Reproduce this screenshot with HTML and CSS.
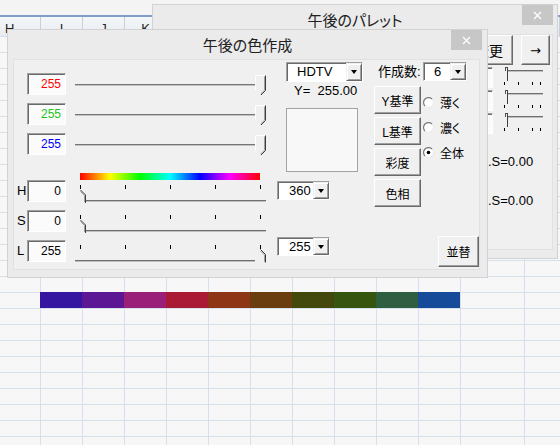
FILE: index.html
```html
<!DOCTYPE html>
<html lang="ja">
<head>
<meta charset="utf-8">
<title>午後の色作成</title>
<link rel="stylesheet" href="styles.css">
</head>
<body>
<div class="sheet">
  <div class="ribbon"></div>
  <div class="colheads">
    <div class="ch ch-first">H</div>
    <div class="ch">I</div>
    <div class="ch">J</div>
    <div class="ch">K</div>
    <div class="ch"></div>
    <div class="ch"></div>
    <div class="ch"></div>
    <div class="ch"></div>
    <div class="ch"></div>
    <div class="ch"></div>
    <div class="ch"></div>
    <div class="ch"></div>
    <div class="ch"></div>
  </div>
  <div class="cells">
    <div class="swatches">
      <div class="swatch" style="background:#3516a0"></div>
      <div class="swatch" style="background:#5c1894"></div>
      <div class="swatch" style="background:#991f79"></div>
      <div class="swatch" style="background:#ab1a34"></div>
      <div class="swatch" style="background:#8d3515"></div>
      <div class="swatch" style="background:#6b3e10"></div>
      <div class="swatch" style="background:#43480c"></div>
      <div class="swatch" style="background:#36550f"></div>
      <div class="swatch" style="background:#2f5e41"></div>
      <div class="swatch" style="background:#154b99"></div>
    </div>
  </div>
</div>

<div class="win win-back">
  <div class="titlebar">
    <div class="title">午後のパレット</div>
    <div class="close close-back"><svg width="9" height="9" viewBox="0 0 9 9"><path d="M1 1L8 8M8 1L1 8" stroke="#fff" stroke-width="1.3"/></svg></div>
  </div>
  <div class="bpanel">
    <div class="bright">
      <div class="brow">
        <div class="btn btn-chg">変更</div>
        <div class="btn btn-arr">→</div>
      </div>
      <div class="minis">
        <div class="mrow">
          <div class="tb tb-mini"></div>
          <svg width="46" height="23" viewBox="0 0 46 23"><path d="M2.5 1V4M2 0.5H4.5" stroke="#505050"/><path d="M4.5 0V14" stroke="#404040"/><path d="M5 3.5H40" stroke="#6e6e6e"/><path d="M5 4.5H40" stroke="#c0c0c0"/><path d="M1.5 15V18M15.5 15V18M29.5 15V18M37.5 15V18" stroke="#000"/></svg>
        </div>
        <div class="mrow">
          <div class="tb tb-mini"></div>
          <svg width="46" height="23" viewBox="0 0 46 23"><path d="M2.5 1V4M2 0.5H4.5" stroke="#505050"/><path d="M4.5 0V14" stroke="#404040"/><path d="M5 3.5H40" stroke="#6e6e6e"/><path d="M5 4.5H40" stroke="#c0c0c0"/><path d="M1.5 15V18M15.5 15V18M29.5 15V18M37.5 15V18" stroke="#000"/></svg>
        </div>
        <div class="mrow">
          <div class="tb tb-mini"></div>
          <svg width="46" height="23" viewBox="0 0 46 23"><path d="M2.5 1V4M2 0.5H4.5" stroke="#505050"/><path d="M4.5 0V14" stroke="#404040"/><path d="M5 3.5H40" stroke="#6e6e6e"/><path d="M5 4.5H40" stroke="#c0c0c0"/><path d="M1.5 15V18M15.5 15V18M29.5 15V18M37.5 15V18" stroke="#000"/></svg>
        </div>
      </div>
      <div class="slabels">
        <div class="slabel">.S=0.00</div>
        <div class="slabel">.S=0.00</div>
      </div>
    </div>
  </div>
</div>

<div class="win win-front">
  <div class="titlebar">
    <div class="title">午後の色作成</div>
    <div class="close"><svg width="9" height="9" viewBox="0 0 9 9"><path d="M1 1L8 8M8 1L1 8" stroke="#fff" stroke-width="1.3"/></svg></div>
  </div>
  <div class="panel">
    <div class="pleft">
      <div class="ptop">
        <div class="rows rows-rgb">
          <div class="srow">
            <span class="lbl"></span>
            <div class="tb tb-r">255</div>
            <svg class="slider" width="195" height="24" viewBox="0 0 195 24"><path d="M0 11.5H181" stroke="#767676"/><path d="M0 12.5H181" stroke="#c2c2c2"/><path d="M180.5 17.5V2.5H190" fill="none" stroke="#fff"/><path d="M190.5 2.5V17.5L186 22" fill="none" stroke="#3c3c3c"/><path d="M189.5 3.5V17.2L185.5 21" fill="none" stroke="#a0a0a0"/></svg>
          </div>
          <div class="srow">
            <span class="lbl"></span>
            <div class="tb tb-g">255</div>
            <svg class="slider" width="195" height="24" viewBox="0 0 195 24"><path d="M0 11.5H181" stroke="#767676"/><path d="M0 12.5H181" stroke="#c2c2c2"/><path d="M180.5 17.5V2.5H190" fill="none" stroke="#fff"/><path d="M190.5 2.5V17.5L186 22" fill="none" stroke="#3c3c3c"/><path d="M189.5 3.5V17.2L185.5 21" fill="none" stroke="#a0a0a0"/></svg>
          </div>
          <div class="srow">
            <span class="lbl"></span>
            <div class="tb tb-b">255</div>
            <svg class="slider" width="195" height="24" viewBox="0 0 195 24"><path d="M0 11.5H181" stroke="#767676"/><path d="M0 12.5H181" stroke="#c2c2c2"/><path d="M180.5 17.5V2.5H190" fill="none" stroke="#fff"/><path d="M190.5 2.5V17.5L186 22" fill="none" stroke="#3c3c3c"/><path d="M189.5 3.5V17.2L185.5 21" fill="none" stroke="#a0a0a0"/></svg>
          </div>
        </div>
        <div class="colc">
          <div class="combo combo-hdtv"><span class="cv">HDTV</span><span class="dd"></span></div>
          <div class="yval">Y=  255.00</div>
          <div class="preview"></div>
        </div>
      </div>
      <div class="rainbow"></div>
      <div class="rows rows-hsl">
        <div class="srow">
          <span class="lbl">H</span>
          <div class="tb">0</div>
          <svg class="slider" width="195" height="24" viewBox="0 0 195 24"><path d="M5.5 5V9M50.5 5V9M95.5 5V9M140.5 5V9M185.5 5V9" stroke="#000"/><path d="M11 20.5H191" stroke="#6e6e6e"/><path d="M11 21.5H191" stroke="#c0c0c0"/><path d="M5.5 10L10.5 15V23" fill="none" stroke="#3c3c3c"/><path d="M5.5 11.5L9.5 15.5V22" fill="none" stroke="#a0a0a0"/></svg>
          <div class="combo combo-num combo-h"><span class="cv">360</span><span class="dd"></span></div>
        </div>
        <div class="srow">
          <span class="lbl">S</span>
          <div class="tb">0</div>
          <svg class="slider" width="195" height="24" viewBox="0 0 195 24"><path d="M5.5 5V9M50.5 5V9M95.5 5V9M140.5 5V9M185.5 5V9" stroke="#000"/><path d="M11 20.5H191" stroke="#6e6e6e"/><path d="M11 21.5H191" stroke="#c0c0c0"/><path d="M5.5 10L10.5 15V23" fill="none" stroke="#3c3c3c"/><path d="M5.5 11.5L9.5 15.5V22" fill="none" stroke="#a0a0a0"/></svg>
        </div>
        <div class="srow">
          <span class="lbl">L</span>
          <div class="tb">255</div>
          <svg class="slider" width="195" height="24" viewBox="0 0 195 24"><path d="M5.5 5V9M50.5 5V9M95.5 5V9M140.5 5V9M185.5 5V9" stroke="#000"/><path d="M0 20.5H180" stroke="#6e6e6e"/><path d="M0 21.5H180" stroke="#c0c0c0"/><path d="M185.5 9.5L190.5 14.5V22.5" fill="none" stroke="#3c3c3c"/><path d="M185.5 11L189.5 15V22" fill="none" stroke="#a0a0a0"/></svg>
          <div class="combo combo-num combo-l"><span class="cv">255</span><span class="dd"></span></div>
        </div>
      </div>
    </div>
    <div class="cold">
      <div class="cntlbl">作成数:</div>
      <div class="btn btn-side">Y基準</div>
      <div class="btn btn-side">L基準</div>
      <div class="btn btn-side">彩度</div>
      <div class="btn btn-side">色相</div>
    </div>
    <div class="cole">
      <div class="combo combo-cnt"><span class="cv">6</span><span class="dd"></span></div>
      <div class="radios">
        <div class="radio"><svg width="11" height="11" viewBox="0 0 11 11"><circle cx="5.5" cy="5.5" r="4.8" fill="#fff"/><path d="M2 9A4.8 4.8 0 0 1 9 2" fill="none" stroke="#7a7a7a" stroke-width="1.2"/><path d="M9 2A4.8 4.8 0 0 1 2 9" fill="none" stroke="#e6e6e6" stroke-width="1"/></svg><span>薄く</span></div>
        <div class="radio"><svg width="11" height="11" viewBox="0 0 11 11"><circle cx="5.5" cy="5.5" r="4.8" fill="#fff"/><path d="M2 9A4.8 4.8 0 0 1 9 2" fill="none" stroke="#7a7a7a" stroke-width="1.2"/><path d="M9 2A4.8 4.8 0 0 1 2 9" fill="none" stroke="#e6e6e6" stroke-width="1"/></svg><span>濃く</span></div>
        <div class="radio"><svg width="11" height="11" viewBox="0 0 11 11"><circle cx="5.5" cy="5.5" r="4.8" fill="#fff"/><path d="M2 9A4.8 4.8 0 0 1 9 2" fill="none" stroke="#7a7a7a" stroke-width="1.2"/><path d="M9 2A4.8 4.8 0 0 1 2 9" fill="none" stroke="#e6e6e6" stroke-width="1"/><circle cx="5.5" cy="5.5" r="1.8" fill="#000"/></svg><span>全体</span></div>
      </div>
      <div class="btn btn-sort">並替</div>
    </div>
  </div>
</div>
</body>
</html>
```

FILE: styles.css
```css
* { box-sizing: border-box; }
html, body { margin: 0; padding: 0; }
body {
  width: 560px;
  height: 445px;
  overflow: hidden;
  position: relative;
  background: #f7f7f7;
  font-family: "Liberation Sans", "Noto Sans CJK JP", sans-serif;
  font-size: 13px;
  color: #000;
}

/* ---------- spreadsheet ---------- */
.sheet {
  width: 560px;
  height: 445px;
  display: flex;
  flex-direction: column;
}
.ribbon {
  flex: none;
  height: 17px;
  background: #f4f4f4;
  border-bottom: 2px solid #7f9ec9;
}
.colheads {
  flex: none;
  height: 19px;
  display: grid;
  grid-template-columns: 41px repeat(10, 42px) 64px 1fr;
  background: linear-gradient(#f4f6f9, #e8ecf1);
}
.ch {
  border-right: 1px solid #c6d0dc;
  text-align: center;
  font-size: 13px;
  line-height: 19px;
  padding-top: 2px;
  color: #222;
}
.ch-first { text-align: left; padding-left: 5px; }
.cells {
  flex: 1;
  display: grid;
  grid-template-columns: 40px repeat(10, 42px) 1fr;
  grid-template-rows: repeat(26, 16px);
  background-color: #f7f7f7;
  background-image:
    linear-gradient(#d6dfeb, #d6dfeb),
    repeating-linear-gradient(to right, #d6dfeb 0 1px, transparent 1px 42px),
    repeating-linear-gradient(to bottom, #d6dfeb 0 1px, transparent 1px 16px);
  background-size: 1px 100%, 421px 100%, 100% 100%;
  background-position: 524px 0, 40px 0, 0 0;
  background-repeat: no-repeat;
}
.swatches {
  grid-row: 17;
  grid-column: 2 / 12;
  display: flex;
}
.swatch { flex: 1; }

/* ---------- windows ---------- */
.win {
  position: absolute;
  display: flex;
  flex-direction: column;
  background: #ebebeb;
  border: 1px solid #d2d2d2;
}
.win-front { left: 7px; top: 29px; width: 481px; height: 249px; }
.win-back { left: 152px; top: 4px; width: 406px; height: 255px; }

.titlebar {
  flex: none;
  height: 29px;
  display: grid;
  grid-template-columns: 1fr auto 1fr;
}
.title {
  grid-column: 2;
  grid-row: 1;
  font-family: "Noto Sans CJK JP", sans-serif;
  font-size: 15px;
  line-height: 29px;
  color: #202020;
  white-space: nowrap;
  font-feature-settings: "palt";
}
.close {
  grid-column: 3;
  grid-row: 1;
  justify-self: end;
  width: 31px;
  height: 20px;
  margin-right: 5px;
  background: #c7c7c7;
  display: flex;
  align-items: center;
  justify-content: center;
}
.close-back { margin-right: 4px; }

/* ---------- front panel ---------- */
.panel {
  flex: none;
  margin-left: 5px;
  width: 467px;
  height: 211px;
  background: #f0f0f0;
  box-shadow: inset 0 0 0 1px #e1e1e1;
  display: flex;
}
.pleft { width: 350px; display: flex; flex-direction: column; }
.ptop { height: 114px; flex: none; display: flex; }
.rows { display: flex; flex-direction: column; gap: 8px; }
.rows-rgb { padding-top: 14px; }
.srow { display: flex; height: 22px; flex: none; }
.lbl { width: 14px; flex: none; padding-left: 4px; font-size: 13px; line-height: 22px; }
.tb {
  width: 39px;
  height: 22px;
  flex: none;
  border: 1px solid;
  border-color: #a0a0a0 #fff #fff #a0a0a0;
  box-shadow: inset 1px 1px #696969;
  background: #fbfbfb;
  text-align: right;
  padding-right: 4px;
  font-size: 12px;
  line-height: 20px;
}
.tb-r { color: #f00; }
.tb-g { color: #1cc51c; }
.tb-b { color: #00f; }
.slider { flex: none; margin-left: 9px; overflow: visible; }

.colc { margin-left: 16px; width: 77px; padding-top: 3px; display: flex; flex-direction: column; }
.combo {
  display: flex;
  height: 20px;
  flex: none;
  border: 1px solid;
  border-color: #a0a0a0 #fff #fff #a0a0a0;
  box-shadow: inset 1px 1px #696969;
  background: #fff;
}
.cv { flex: 1; padding-left: 10px; font-size: 13px; line-height: 18px; }
.dd {
  width: 16px;
  flex: none;
  background: #f0f0f0;
  border: 1px solid;
  border-color: #f0f0f0 #696969 #696969 #f0f0f0;
  box-shadow: inset 1px 1px #fff, inset -1px -1px #a0a0a0;
  display: flex;
  align-items: center;
  justify-content: center;
}
.dd::after {
  content: "";
  border-left: 3.5px solid transparent;
  border-right: 3.5px solid transparent;
  border-top: 4px solid #000;
}
.yval { height: 18px; padding-left: 8px; line-height: 18px; font-size: 13px; white-space: pre; }
.preview { margin-top: 8px; width: 72px; height: 64px; border: 1px solid #a3a3a3; background: #f8f8f8; }

.rainbow {
  flex: none;
  margin-left: 67px;
  width: 180px;
  height: 7px;
  background: linear-gradient(to right, #f00, #ff0, #0f0, #0ff, #00f, #f0f, #f00);
}
.srow .combo { width: 53px; height: 19px; margin-left: 7px; }
.combo-num .cv { padding-left: 11px; }
.combo-h { margin-top: 1px; }
.combo-l { margin-top: -3px; }

.cold { margin-left: 11px; width: 47px; flex: none; display: flex; flex-direction: column; gap: 3px; }
.cntlbl {
  height: 24px;
  padding-left: 4px;
  line-height: 26px;
  font-size: 13px;
  white-space: nowrap;
  font-feature-settings: "palt";
}
.btn {
  display: flex;
  align-items: center;
  justify-content: center;
  background: #f0f0f0;
  border: 1px solid;
  border-color: #fff #696969 #696969 #fff;
  box-shadow: inset -1px -1px #a0a0a0;
  font-size: 12px;
  white-space: nowrap;
  font-feature-settings: "palt";
}
.btn-side { height: 28px; flex: none; }

.cole { margin-left: 2px; width: 57px; flex: none; padding: 3px 0; display: flex; flex-direction: column; }
.combo-cnt { width: 44px; height: 19px; }
.radios { margin-top: 13px; display: flex; flex-direction: column; gap: 9px; }
.radio { height: 16px; display: flex; align-items: center; gap: 6px; font-size: 12px; font-feature-settings: "palt"; }
.radio svg { flex: none; }
.btn-sort { margin-top: auto; align-self: flex-end; margin-right: 1px; width: 41px; height: 31px; }

/* ---------- back panel ---------- */
.bpanel {
  flex: none;
  margin-left: 5px;
  width: 395px;
  height: 216px;
  background: #f0f0f0;
  box-shadow: inset 0 0 0 1px #e1e1e1;
  display: flex;
  justify-content: flex-end;
}
.bright { width: 100px; padding-top: 1px; display: flex; flex-direction: column; }
.brow { display: flex; justify-content: flex-end; gap: 8px; padding-right: 3px; }
.btn-chg { width: 48px; height: 30px; font-size: 14px; }
.btn-arr { width: 29px; height: 30px; font-family: "DejaVu Sans", sans-serif; font-size: 13px; }
.minis { margin-top: 2px; display: flex; flex-direction: column; }
.mrow { display: flex; height: 23px; }
.tb-mini { width: 38px; height: 21px; margin-left: 2px; }
.mrow svg { flex: none; margin-left: 10px; }
.slabels { margin-left: 35px; margin-top: 18px; display: flex; flex-direction: column; gap: 23px; }
.slabel { line-height: 16px; font-size: 13px; }
```
